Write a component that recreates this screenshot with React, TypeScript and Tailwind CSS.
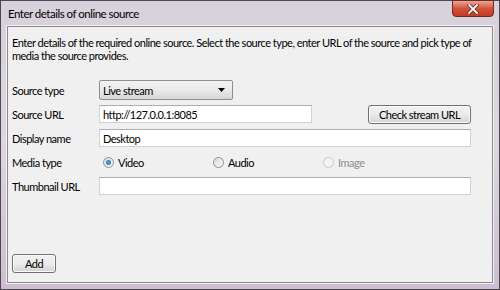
import React from 'react'

const font = { fontFamily: 'Lato, "Noto Sans", sans-serif' }

function Radio({ label, checked, disabled }: { label: string; checked?: boolean; disabled?: boolean }) {
  return (
    <div className="flex items-center gap-[4px] w-[110px]">
      <span
        className={`w-[11px] h-[11px] rounded-full border flex items-center justify-center ${
          disabled ? 'border-[#c8c8c8] bg-[#f4f4f4]' : 'border-[#8e8f8f] bg-gradient-to-br from-[#d9d9d9] to-[#fbfbfb]'
        }`}
      >
        {checked && <span className="w-[5px] h-[5px] rounded-full bg-[radial-gradient(circle,#5cb0ea,#0d5b93)]" />}
      </span>
      <span className={disabled ? 'text-[#8d8d8d]' : 'text-black'}>{label}</span>
    </div>
  )
}

function Btn({ children, className = '' }: { children: React.ReactNode; className?: string }) {
  return (
    <div
      className={`h-[19px] flex items-center justify-center rounded-[3px] border border-[#707070] bg-gradient-to-b from-[#f2f2f2] via-[#ebebeb] to-[#d4d4d4] shadow-[inset_0_0_0_1px_#fcfcfc] text-black ${className}`}
    >
      {children}
    </div>
  )
}

function Field({ value = '', className = '' }: { value?: string; className?: string }) {
  return (
    <div
      className={`h-[18px] flex items-center px-[3px] bg-white border border-[#cfd3d8] border-t-[#abadb3] ${className}`}
    >
      {value}
    </div>
  )
}

export default function App() {
  return (
    <div
      className="w-[500px] h-[290px] flex flex-col border border-[#4a4a4e] bg-gradient-to-b from-[#d6d1da] via-[#ddd6e0] to-[#cdbdd2] text-[11px] leading-[13px] tracking-[-0.5px]"
      style={font}
    >
      {/* title bar */}
      <div className="h-[25px] flex justify-between items-start pl-[7px] pr-[5px]">
        <span className="mt-[6px] text-[11.5px] tracking-[-0.5px] text-black">Enter details of online source</span>
        <div className="w-[42px] h-[17px] -mt-px rounded-b-[4px] border border-[#6b2a22] bg-gradient-to-b from-[#e8a596] via-[#d2513b] to-[#c53a22] flex items-center justify-center">
          <svg width="12" height="10" viewBox="0 0 12 10">
            <path d="M2 1 L10 9 M10 1 L2 9" stroke="#4a2a26" strokeWidth="3.2" strokeLinecap="square" />
            <path d="M2 1 L10 9 M10 1 L2 9" stroke="#ffffff" strokeWidth="1.8" strokeLinecap="square" />
          </svg>
        </div>
      </div>

      {/* client area */}
      <div className="flex-1 mx-[6px] mb-[6px] border border-[#8a8a8c] shadow-[0_0_0_1px_#f4f0f6] bg-[#f0f0f0] flex flex-col pl-[4px] pr-[22px] pt-[9px] pb-[9px] text-black">
        <p className="whitespace-nowrap">
          Enter details of the required online source. Select the source type, enter URL of the source and pick type of
          <br />
          media the source provides.
        </p>

        <div className="mt-[16px] grid grid-cols-[87px_1fr] auto-rows-[24px] items-center">
          <span>Source type</span>
          <div className="w-[134px] h-[20px] flex items-center justify-between pl-[3px] pr-[7px] rounded-[2px] border border-[#8e8f8f] bg-gradient-to-b from-[#f2f2f2] via-[#ebebeb] to-[#d6d6d6]">
            <span>Live stream</span>
            <svg width="7" height="4" viewBox="0 0 7 4">
              <path d="M0 0 H7 L3.5 4 Z" fill="#000" />
            </svg>
          </div>

          <span>Source URL</span>
          <div className="flex items-center justify-between">
            <Field value="http://127.0.0.1:8085" className="w-[213px]" />
            <Btn className="w-[103px]">Check stream URL</Btn>
          </div>

          <span>Display name</span>
          <Field value="Desktop" className="w-[372px]" />

          <span>Media type</span>
          <div className="flex items-center pl-[4px]">
            <Radio label="Video" checked />
            <Radio label="Audio" />
            <Radio label="Image" disabled />
          </div>

          <span>Thumbnail URL</span>
          <Field className="w-[372px]" />
        </div>

        <div className="mt-auto">
          <Btn className="w-[44px]">Add</Btn>
        </div>
      </div>
    </div>
  )
}
